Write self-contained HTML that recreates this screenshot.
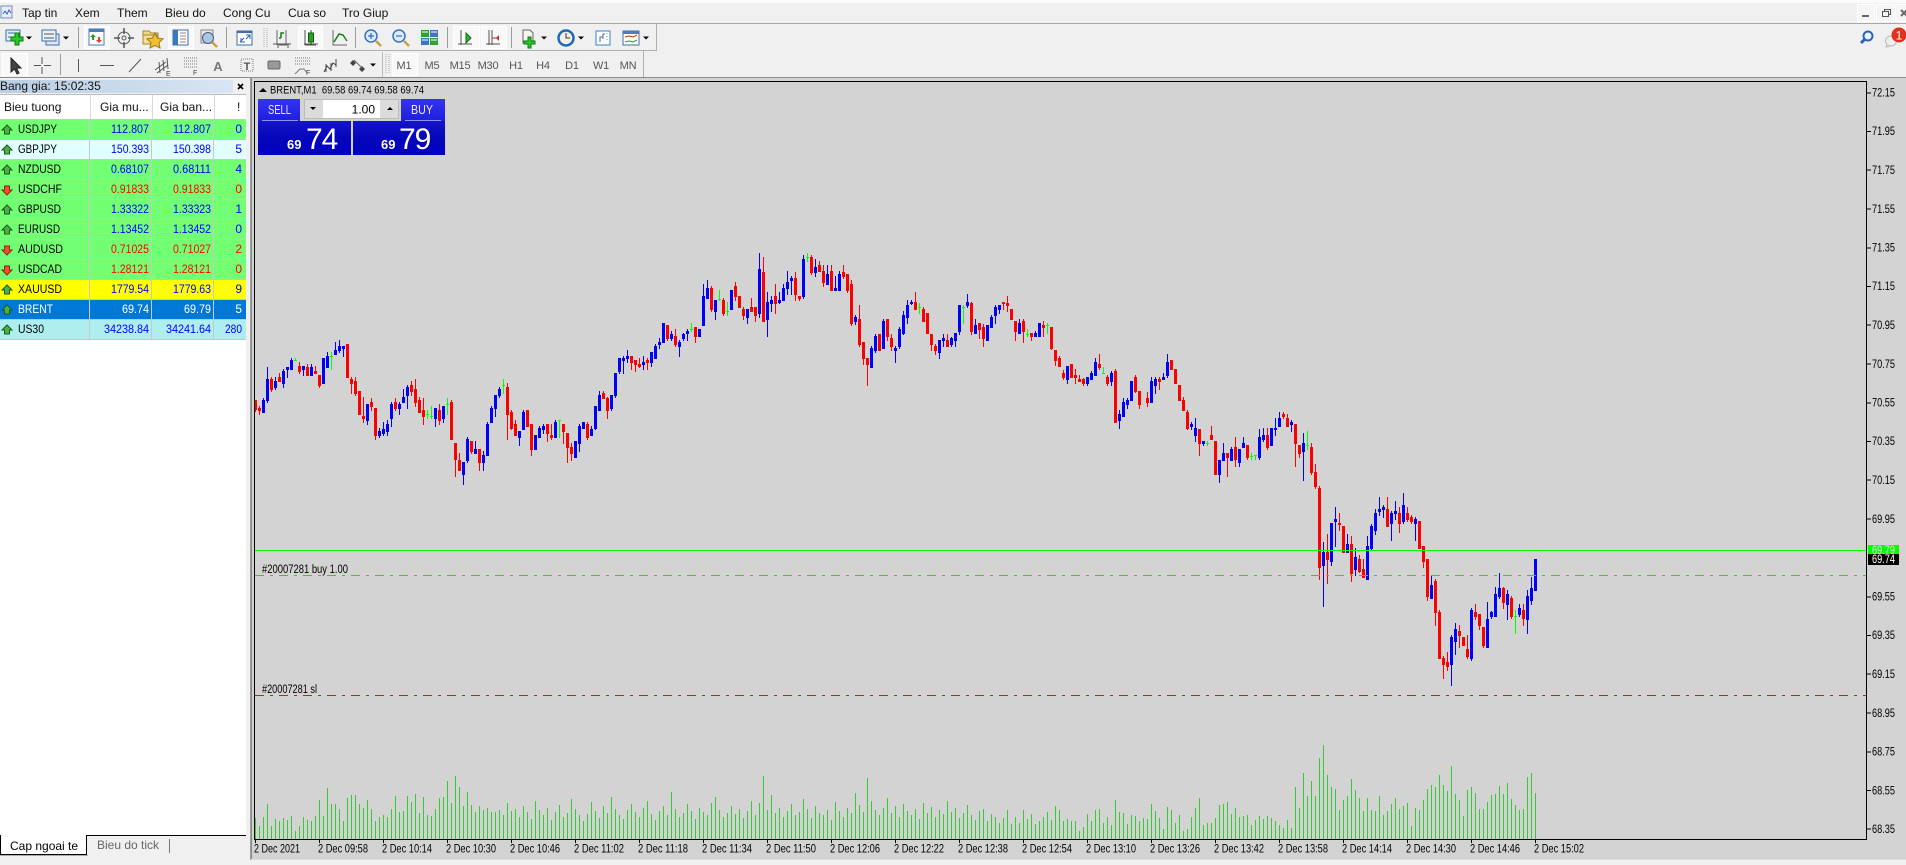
<!DOCTYPE html>
<html><head><meta charset="utf-8"><title>MT4</title>
<style>
html,body{margin:0;padding:0;background:#f0f0f0;overflow:hidden}
svg{display:block;font-family:"Liberation Sans",Arial,sans-serif}
.m{font-size:12px;fill:#111}
.h{font-size:12px;fill:#111}
.s{font-size:12px;fill:#000}
.n{font-size:12px;text-anchor:end}
.bl{fill:#0000ff}.rd{fill:#ff0000}.wh{fill:#fff}
.tf{font-size:11px;fill:#555;text-anchor:middle;letter-spacing:-.2px}
.p{font-size:11.5px;fill:#000}
.t{font-size:11.5px;fill:#000}
.c path{fill:none}
.w{stroke-width:3}.k{stroke-width:9}
.B{stroke:#0000ff}.R{stroke:#ff0000}.G{stroke:#00ff00}
.ic{fill:none;stroke:#555;stroke-width:1}
</style></head><body>
<svg width="1906" height="865" viewBox="0 0 1906 865" xmlns="http://www.w3.org/2000/svg">
<defs>
<linearGradient id="hd" x1="0" x2="1" y1="0" y2="0"><stop offset="0" stop-color="#b9cee3"/><stop offset="1" stop-color="#d8e5f3"/></linearGradient>
<linearGradient id="bh" x1="0" x2="0" y1="0" y2="1"><stop offset="0" stop-color="#3535f0"/><stop offset="1" stop-color="#1c1cdc"/></linearGradient>
<linearGradient id="bb" x1="0" x2="0" y1="0" y2="1"><stop offset="0" stop-color="#1414c8"/><stop offset=".5" stop-color="#0606ba"/><stop offset="1" stop-color="#0000c4"/></linearGradient>
<g id="au"><path d="M7 -5L12 0H9.5V4H4.5V0H2Z" fill="#4bb04b" stroke="#1b5c1b" stroke-width="1"/></g>
<g id="ad"><path d="M7 5L12 0H9.5V-4H4.5V0H2Z" fill="#f05030" stroke="#8c2a14" stroke-width="1"/></g>
<path id="tr" d="M-3 -1.5H3L0 1.5Z" fill="#000"/>
</defs>

<!-- background bars -->
<rect width="1906" height="865" fill="#f0f0f0"/>
<rect width="1906" height="3" fill="#fbfbfb"/>
<rect y="23" width="1906" height="1" fill="#a8a8a8"/>
<rect y="50" width="656" height="1" fill="#b0b0b0"/>
<rect x="656" y="24" width="1" height="27" fill="#b0b0b0"/>
<rect x="643" y="51" width="1" height="26" fill="#b0b0b0"/>
<rect y="77" width="1906" height="1" fill="#8a8a8a"/>

<!-- app icon + menu -->
<g transform="translate(1 5)"><rect x="0" y="1" width="11" height="12" fill="#e8eef8" stroke="#6f8fbf"/><path d="M2 9l2-3 2 3 2-4 2 3" fill="none" stroke="#3060b0"/></g>
<text class="m" x="22" y="17">Tap tin</text>
<text class="m" x="75" y="17">Xem</text>
<text class="m" x="117" y="17">Them</text>
<text class="m" x="165" y="17">Bieu do</text>
<text class="m" x="223" y="17">Cong Cu</text>
<text class="m" x="288" y="17">Cua so</text>
<text class="m" x="342" y="17">Tro Giup</text>

<!-- window buttons -->
<g fill="#f5f5f5" stroke="#fff"><rect x="1857.5" y="4.5" width="17" height="17"/><rect x="1876.5" y="4.5" width="17" height="17"/><rect x="1895.5" y="4.5" width="14" height="17"/></g>
<rect x="1862" y="15" width="7" height="2" fill="#666"/>
<path d="M1882.5 11.5h6v5h-6zM1884.5 11.5v-2h6v5h-2" fill="none" stroke="#555"/>
<path d="M1901 10l6 6M1907 10l-6 6" stroke="#666" stroke-width="2"/>
<circle cx="1868" cy="36" r="4.5" fill="#eaf2ff" stroke="#2a62c0" stroke-width="2"/>
<path d="M1864.5 39.5L1861 43" stroke="#2a62c0" stroke-width="3"/>
<ellipse cx="1891" cy="41" rx="5.5" ry="5" fill="#eee" stroke="#bbb"/><path d="M1887 45l-1 2 4-1" fill="#ddd" stroke="#bbb"/>
<circle cx="1899" cy="35" r="7.5" fill="#e03020"/>
<text x="1899" y="39.5" font-size="12" fill="#fff" text-anchor="middle">1</text>

<!-- toolbar highlighted boxes -->
<g fill="#f8f8f8" stroke="#fff">
<rect x="84.5" y="26.5" width="25" height="22"/><rect x="168.5" y="26.5" width="25" height="22"/>
<rect x="298.5" y="26.5" width="24" height="22"/><rect x="453.5" y="26.5" width="26" height="22"/>
<rect x="481.5" y="26.5" width="25" height="22"/><rect x="2.5" y="53.5" width="25" height="22"/>
<rect x="392.5" y="53.5" width="25" height="22"/>
</g>
<!-- separators -->
<g fill="#9c9c9c">
<rect x="78" y="27" width="1" height="21"/><rect x="226" y="27" width="1" height="21"/>
<rect x="355" y="27" width="1" height="21"/><rect x="447" y="27" width="1" height="21"/>
<rect x="511" y="27" width="1" height="21"/><rect x="60" y="54" width="1" height="21"/>
<rect x="382" y="52" width="1" height="25" fill="#bbb"/>
</g>
<path d="M264 28v20M267 28v20M386 54v20M389 54v20" stroke="#aaa" stroke-dasharray="1 1" fill="none"/>

<!-- Row 1 icons -->
<g><rect x="6" y="30" width="14" height="11" fill="#e4ecf8" stroke="#3a6ea8"/><path d="M8 33h10M8 37h6" stroke="#3a6ea8"/><path d="M15 33h4v4h4v4h-4v4h-4v-4h-4v-4h4z" fill="#28c828" stroke="#0a7a0a"/></g>
<use href="#tr" x="29" y="38"/>
<g><rect x="46" y="34" width="13" height="11" fill="#dfe9f6" stroke="#3a6ea8"/><rect x="42" y="30" width="14" height="11" fill="#e8f0fa" stroke="#3a6ea8"/><path d="M44 34h10M44 38h10" stroke="#555"/></g>
<use href="#tr" x="66" y="38"/>
<g><rect x="89" y="29" width="15" height="16" fill="#fff" stroke="#4a7eb5"/><rect x="89" y="29" width="15" height="3" fill="#4a7eb5"/><path d="M93 34l3 3h-2v3h-2v-3h-2z" fill="#28a028"/><path d="M99 43l-3-3h2v-3h2v3h2z" fill="#e04020"/></g>
<g fill="none" stroke="#555"><circle cx="124" cy="38" r="6"/><circle cx="124" cy="38" r="2"/><path d="M124 28v6M124 42v6M114 38h6M128 38h6" stroke-width="1.5"/></g>
<g><path d="M143 34v-3h6l2 2h7v4h-15z" fill="#f0d880" stroke="#a08840"/><rect x="143" y="35" width="14" height="9" fill="#f4e090" stroke="#a08840"/><path d="M155 33l2.5 5 5.500 .8-4 3.900 1 5.300-5-2.600-5 2.600 1-5.300-4-3.900 5.500-.8z" fill="#f0c030" stroke="#a07810"/></g>
<g><rect x="173" y="30" width="15" height="15" fill="#fff" stroke="#3a6ea8"/><rect x="173" y="30" width="5" height="15" fill="#3a78c0"/><path d="M180 33h6M180 36h6M180 39h6M180 42h6" stroke="#888"/></g>
<g><rect x="201" y="30" width="12" height="13" fill="#e8e8e8" stroke="#888"/><circle cx="208" cy="38" r="5.500" fill="#a8c8e8" stroke="#557"/><path d="M212 42l5 5" stroke="#c8a040" stroke-width="2.500"/></g>
<g><rect x="237" y="31" width="15" height="14" fill="#fff" stroke="#3a6ea8"/><rect x="237" y="31" width="15" height="2" fill="#3a6ea8"/><path d="M240 42l4-4M241 38v4h4M250 35l-4 4M246 35h4v4" stroke="#2a60b0" fill="none"/></g>
<g fill="none" stroke="#555"><path d="M277 30v15M277 45h12M286 30v15" stroke="#666"/><path d="M281 38v-5h3M281 38h-2" stroke="#108010" stroke-width="1.500"/><path d="M273 44h18M278 46v2M288 46v2" stroke="#555"/></g>
<g fill="none" stroke="#555"><path d="M305 30v15M305 45h11M304 44h14"/><rect x="308.500" y="33" width="5" height="9" fill="#2aa02a" stroke="#0a600a"/><path d="M311 30v3M311 42v3" stroke="#0a600a"/></g>
<g fill="none"><path d="M333 30v15h14" stroke="#666"/><path d="M334 42l5-8 4 1 4 6" stroke="#188018" stroke-width="1.500"/></g>
<g><circle cx="371" cy="36" r="6" fill="#d8ecff" stroke="#3a70c0" stroke-width="1.500"/><path d="M368 36h6M371 33v6" stroke="#1a50a0"/><path d="M376 41l5 5" stroke="#c8a040" stroke-width="2.500"/></g>
<g><circle cx="399" cy="36" r="6" fill="#d8ecff" stroke="#3a70c0" stroke-width="1.500"/><path d="M396 36h6" stroke="#1a50a0"/><path d="M404 41l5 5" stroke="#c8a040" stroke-width="2.500"/></g>
<g><rect x="421" y="30" width="8" height="7" fill="#30a030"/><rect x="430" y="30" width="8" height="7" fill="#3a78c0"/><rect x="421" y="38" width="8" height="7" fill="#3a78c0"/><rect x="430" y="38" width="8" height="7" fill="#30a030"/><path d="M422 32h6M431 32h6M422 40h6M431 40h6" stroke="#fff"/></g>
<g fill="none"><path d="M461 30v15M458 44h14" stroke="#555"/><path d="M466 33l5 5-5 5z" fill="#30b030" stroke="#107010"/></g>
<g fill="none"><path d="M489 30v15M486 44h14" stroke="#555"/><path d="M492 30v15" stroke="#555"/><path d="M497 38h-5" stroke="#c03010" stroke-width="1"/><path d="M499 35v6l-3-3z" fill="#c03010"/></g>
<g><path d="M523 30h7l3 3v10h-10z" fill="#f4f4ec" stroke="#666"/><path d="M528 37h3v4h4v3h-4v4h-3v-4h-4v-3h4z" fill="#28c828" stroke="#0a7a0a"/></g>
<use href="#tr" x="544" y="38"/>
<g><circle cx="566" cy="38" r="7.500" fill="#f4f0e8" stroke="#1e68b8" stroke-width="2.500"/><path d="M566 33v5h4" stroke="#333" fill="none"/></g>
<use href="#tr" x="581" y="38"/>
<g><rect x="596" y="31" width="14" height="14" fill="#fff" stroke="#3a80c8"/><path d="M600 42v-5h3M603 39v-5h2" stroke="#3a70a8" fill="none"/><path d="M607 33v1M607 36v1M607 39v1" stroke="#888"/></g>
<g><rect x="623" y="31" width="16" height="14" fill="#fff" stroke="#3a6ea8"/><rect x="623" y="31" width="16" height="3" fill="#4a7eb5"/><path d="M625 37l4-1 4 1 4-2" stroke="#c03010" fill="none"/><path d="M625 42l4-1 4 1 4-2" stroke="#20a020" fill="none"/></g>
<use href="#tr" x="646" y="38"/>

<!-- Row 2 icons -->
<path d="M11 58v14l3.500-3 2.500 5 2-1-2.500-5h4.500z" fill="#444" stroke="#222"/>
<path d="M42 57v7M42 67v7M34 65.500h7M44 65.500h7" stroke="#555" fill="none"/>
<path d="M78.500 59v13M100 65.500h14M129 72l12-13" stroke="#555" stroke-width="1" fill="none"/>
<g class="ic"><path d="M155 70l11-8M157 73l11-8M159 62l1 11M163 60l1 11M167 58l1 11"/></g><text x="166" y="76" font-size="7" fill="#444">E</text>
<path d="M184 58h13M184 61h13M184 64h13M184 67h13" stroke="#777" stroke-dasharray="1 1" fill="none"/><text x="193" y="75" font-size="7" fill="#444">F</text>
<text x="218" y="71" font-size="13" font-weight="bold" fill="#777" text-anchor="middle">A</text>
<rect x="241" y="59" width="12" height="12" fill="none" stroke="#777" stroke-dasharray="1 1"/><text x="247" y="70" font-size="11" font-weight="bold" fill="#555" text-anchor="middle">T</text>
<rect x="268" y="61" width="12" height="8" rx="1.500" fill="#999" stroke="#666"/>
<path d="M295 58h15M295 61h15M295 64h15" stroke="#777" stroke-dasharray="1 1" fill="none"/><path d="M295 74l5-5h4l3 4" stroke="#777" fill="none"/><text x="306" y="75" font-size="7" fill="#444">F</text>
<path d="M324 72l3-6 3 3 3-6 3 2M326 64v8M331 63v8M336 59v8" stroke="#444" fill="none"/>
<path d="M353 60l3 3-3 3-3-3zM362 66l3 3-3 3-3-3z" fill="#444"/><path d="M354 60l8 8" stroke="#666"/>
<use href="#tr" x="373" y="65"/>
<text class="tf" x="404" y="69">M1</text><text class="tf" x="432" y="69">M5</text><text class="tf" x="460" y="69">M15</text><text class="tf" x="488" y="69">M30</text><text class="tf" x="516" y="69">H1</text><text class="tf" x="543" y="69">H4</text><text class="tf" x="572" y="69">D1</text><text class="tf" x="601" y="69">W1</text><text class="tf" x="628" y="69">MN</text>

<!-- Market watch panel -->
<rect x="0" y="78" width="250" height="782" fill="#f0f0f0"/>
<rect x="0" y="80" width="233" height="13" fill="url(#hd)"/>
<text class="h" x="0" y="90">Bang gia: 15:02:35</text>
<path d="M238 84l5 5M243 84l-5 5" stroke="#000" stroke-width="1.600"/>
<rect x="0" y="95" width="246" height="740" fill="#fff"/>
<rect x="0" y="94" width="246" height="1" fill="#bbb"/>
<text class="h" x="4" y="111">Bieu tuong</text>
<text class="h" x="100" y="111">Gia mu...</text>
<text class="h" x="160" y="111">Gia ban...</text>
<text class="h" x="237" y="111">!</text>
<g fill="#d8d8d8"><rect x="90" y="95" width="1" height="24"/><rect x="152" y="95" width="1" height="24"/><rect x="214" y="95" width="1" height="24"/></g>
<g fill="#72ff72"><rect y="119" width="246" height="20"/><rect y="159" width="246" height="100"/></g>
<rect y="139" width="246" height="20" fill="#e0ffff"/>
<rect y="259" width="246" height="20" fill="#72ff72"/>
<rect y="279" width="246" height="20" fill="#ffff00"/>
<rect y="299" width="246" height="20" fill="#0078d7"/>
<rect y="319" width="246" height="20" fill="#afeeee"/>
<g fill="#c8c8c8"><rect y="119" width="246" height="1" opacity=".6"/><rect y="139" width="246" height="1"/><rect y="159" width="246" height="1"/><rect y="179" width="246" height="1"/><rect y="199" width="246" height="1"/><rect y="219" width="246" height="1"/><rect y="239" width="246" height="1"/><rect y="259" width="246" height="1"/><rect y="279" width="246" height="1"/><rect y="299" width="246" height="1"/><rect y="319" width="246" height="1"/><rect y="339" width="246" height="1"/>
<rect x="89" y="119" width="1" height="220"/><rect x="151" y="119" width="1" height="220"/><rect x="213" y="119" width="1" height="220"/></g>

<use href="#au" x="0" y="130"/><text class="s" x="18" y="133" textLength="39" lengthAdjust="spacingAndGlyphs">USDJPY</text><text class="n bl" x="149" y="133" textLength="38" lengthAdjust="spacingAndGlyphs">112.807</text><text class="n bl" x="211" y="133" textLength="38" lengthAdjust="spacingAndGlyphs">112.807</text><text class="n bl" x="242" y="133">0</text>
<use href="#au" x="0" y="150"/><text class="s" x="18" y="153" textLength="39" lengthAdjust="spacingAndGlyphs">GBPJPY</text><text class="n bl" x="149" y="153" textLength="38" lengthAdjust="spacingAndGlyphs">150.393</text><text class="n bl" x="211" y="153" textLength="38" lengthAdjust="spacingAndGlyphs">150.398</text><text class="n bl" x="242" y="153">5</text>
<use href="#au" x="0" y="170"/><text class="s" x="18" y="173" textLength="43" lengthAdjust="spacingAndGlyphs">NZDUSD</text><text class="n bl" x="149" y="173" textLength="38" lengthAdjust="spacingAndGlyphs">0.68107</text><text class="n bl" x="211" y="173" textLength="38" lengthAdjust="spacingAndGlyphs">0.68111</text><text class="n bl" x="242" y="173">4</text>
<use href="#ad" x="0" y="190"/><text class="s" x="18" y="193" textLength="44" lengthAdjust="spacingAndGlyphs">USDCHF</text><text class="n rd" x="149" y="193" textLength="38" lengthAdjust="spacingAndGlyphs">0.91833</text><text class="n rd" x="211" y="193" textLength="38" lengthAdjust="spacingAndGlyphs">0.91833</text><text class="n rd" x="242" y="193">0</text>
<use href="#au" x="0" y="210"/><text class="s" x="18" y="213" textLength="43" lengthAdjust="spacingAndGlyphs">GBPUSD</text><text class="n bl" x="149" y="213" textLength="38" lengthAdjust="spacingAndGlyphs">1.33322</text><text class="n bl" x="211" y="213" textLength="38" lengthAdjust="spacingAndGlyphs">1.33323</text><text class="n bl" x="242" y="213">1</text>
<use href="#au" x="0" y="230"/><text class="s" x="18" y="233" textLength="42" lengthAdjust="spacingAndGlyphs">EURUSD</text><text class="n bl" x="149" y="233" textLength="38" lengthAdjust="spacingAndGlyphs">1.13452</text><text class="n bl" x="211" y="233" textLength="38" lengthAdjust="spacingAndGlyphs">1.13452</text><text class="n bl" x="242" y="233">0</text>
<use href="#ad" x="0" y="250"/><text class="s" x="18" y="253" textLength="45" lengthAdjust="spacingAndGlyphs">AUDUSD</text><text class="n rd" x="149" y="253" textLength="38" lengthAdjust="spacingAndGlyphs">0.71025</text><text class="n rd" x="211" y="253" textLength="38" lengthAdjust="spacingAndGlyphs">0.71027</text><text class="n rd" x="242" y="253">2</text>
<use href="#ad" x="0" y="270"/><text class="s" x="18" y="273" textLength="44" lengthAdjust="spacingAndGlyphs">USDCAD</text><text class="n rd" x="149" y="273" textLength="38" lengthAdjust="spacingAndGlyphs">1.28121</text><text class="n rd" x="211" y="273" textLength="38" lengthAdjust="spacingAndGlyphs">1.28121</text><text class="n rd" x="242" y="273">0</text>
<use href="#au" x="0" y="290"/><text class="s" x="18" y="293" textLength="44" lengthAdjust="spacingAndGlyphs">XAUUSD</text><text class="n bl" x="149" y="293" textLength="38" lengthAdjust="spacingAndGlyphs">1779.54</text><text class="n bl" x="211" y="293" textLength="38" lengthAdjust="spacingAndGlyphs">1779.63</text><text class="n bl" x="242" y="293">9</text>
<use href="#au" x="0" y="310"/><text class="s wh" x="18" y="313" style="fill:#fff" textLength="35" lengthAdjust="spacingAndGlyphs">BRENT</text><text class="n wh" x="149" y="313" textLength="27" lengthAdjust="spacingAndGlyphs">69.74</text><text class="n wh" x="211" y="313" textLength="27" lengthAdjust="spacingAndGlyphs">69.79</text><text class="n wh" x="242" y="313">5</text>
<use href="#au" x="0" y="330"/><text class="s" x="18" y="333" textLength="26" lengthAdjust="spacingAndGlyphs">US30</text><text class="n bl" x="149" y="333" textLength="45" lengthAdjust="spacingAndGlyphs">34238.84</text><text class="n bl" x="211" y="333" textLength="45" lengthAdjust="spacingAndGlyphs">34241.64</text><text class="n bl" x="242" y="333" textLength="17" lengthAdjust="spacingAndGlyphs">280</text>

<!-- Tabs -->
<rect x="0" y="836" width="246" height="24" fill="#f0f0f0"/>
<rect x="0" y="835" width="246" height="1" fill="#000"/>
<path d="M.5 835V854.500H86.500V835" fill="#fff" stroke="#000"/>
<text class="h" x="10" y="850" style="fill:#000">Cap ngoai te</text>
<text class="h" x="97" y="849" style="fill:#666">Bieu do tick</text>
<rect x="169" y="839" width="1" height="14" fill="#777"/>
<rect x="87" y="855" width="163" height="1" fill="#f0f0f0"/>
<rect x="0" y="855" width="88" height="1" fill="#aaa"/>
<rect x="0" y="860" width="250" height="1" fill="#bdbdbd"/>
<rect x="250" y="78" width="1" height="783" fill="#a0a0a0"/>

<!-- Chart area -->
<rect x="251" y="78" width="1655" height="782" fill="#d3d3d3"/>
<rect x="251" y="78" width="1" height="782" fill="#888"/>
<rect x="0" y="860" width="1906" height="5" fill="#f0f0f0"/>
<rect x="251" y="859" width="1655" height="1" fill="#dedede"/>

<!-- Volumes -->
<path shape-rendering="crispEdges" fill="none" stroke="#32cd32" stroke-width="1" transform="translate(.5 0)" d="M255 839v-21zm4 0v-13zm4 0v-22zm4 0v-35zm4 0v-13zm4 0v-20zm4 0v-18zm4 0v-21zm4 0v-19zm4 0v-23zm4 0v-8zm4 0v-13zm4 0v-22zm4 0v-19zm4 0v-18zm4 0v-23zm4 0v-39zm4 0v-23zm4 0v-51zm4 0v-35zm4 0v-35zm4 0v-30zm4 0v-18zm4 0v-41zm4 0v-44zm4 0v-44zm4 0v-35zm4 0v-31zm4 0v-39zm4 0v-30zm4 0v-18zm4 0v-22zm4 0v-24zm4 0v-22zm4 0v-30zm4 0v-43zm4 0v-27zm4 0v-28zm4 0v-43zm4 0v-37zm4 0v-45zm4 0v-26zm4 0v-42zm4 0v-24zm4 0v-23zm4 0v-30zm4 0v-41zm4 0v-42zm4 0v-58zm4 0v-36zm4 0v-63zm4 0v-52zm4 0v-33zm4 0v-47zm4 0v-34zm4 0v-27zm4 0v-33zm4 0v-29zm4 0v-31zm4 0v-27zm4 0v-27zm4 0v-29zm4 0v-24zm4 0v-36zm4 0v-28zm4 0v-30zm4 0v-22zm4 0v-33zm4 0v-27zm4 0v-20zm4 0v-38zm4 0v-29zm4 0v-24zm4 0v-31zm4 0v-19zm4 0v-27zm4 0v-34zm4 0v-22zm4 0v-26zm4 0v-40zm4 0v-30zm4 0v-24zm4 0v-18zm4 0v-25zm4 0v-37zm4 0v-28zm4 0v-21zm4 0v-33zm4 0v-26zm4 0v-42zm4 0v-30zm4 0v-24zm4 0v-20zm4 0v-29zm4 0v-35zm4 0v-27zm4 0v-22zm4 0v-31zm4 0v-38zm4 0v-25zm4 0v-19zm4 0v-28zm4 0v-33zm4 0v-24zm4 0v-47zm4 0v-30zm4 0v-22zm4 0v-26zm4 0v-35zm4 0v-28zm4 0v-20zm4 0v-31zm4 0v-27zm4 0v-24zm4 0v-36zm4 0v-42zm4 0v-29zm4 0v-22zm4 0v-26zm4 0v-33zm4 0v-25zm4 0v-30zm4 0v-21zm4 0v-28zm4 0v-38zm4 0v-24zm4 0v-36zm4 0v-63zm4 0v-29zm4 0v-44zm4 0v-26zm4 0v-31zm4 0v-22zm4 0v-28zm4 0v-35zm4 0v-24zm4 0v-27zm4 0v-40zm4 0v-30zm4 0v-21zm4 0v-33zm4 0v-26zm4 0v-24zm4 0v-29zm4 0v-19zm4 0v-37zm4 0v-28zm4 0v-22zm4 0v-31zm4 0v-26zm4 0v-46zm4 0v-34zm4 0v-27zm4 0v-61zm4 0v-38zm4 0v-29zm4 0v-24zm4 0v-31zm4 0v-41zm4 0v-26zm4 0v-33zm4 0v-22zm4 0v-35zm4 0v-28zm4 0v-24zm4 0v-30zm4 0v-20zm4 0v-36zm4 0v-26zm4 0v-32zm4 0v-22zm4 0v-29zm4 0v-25zm4 0v-38zm4 0v-27zm4 0v-31zm4 0v-21zm4 0v-26zm4 0v-34zm4 0v-24zm4 0v-19zm4 0v-28zm4 0v-30zm4 0v-18zm4 0v-25zm4 0v-22zm4 0v-16zm4 0v-21zm4 0v-29zm4 0v-15zm4 0v-22zm4 0v-16zm4 0v-29zm4 0v-20zm4 0v-25zm4 0v-15zm4 0v-18zm4 0v-22zm4 0v-27zm4 0v-19zm4 0v-33zm4 0v-29zm4 0v-18zm4 0v-20zm4 0v-18zm4 0v-18zm4 0v-8zm4 0v-12zm4 0v-25zm4 0v-18zm4 0v-29zm4 0v-30zm4 0v-16zm4 0v-22zm4 0v-14zm4 0v-39zm4 0v-27zm4 0v-26zm4 0v-15zm4 0v-24zm4 0v-23zm4 0v-18zm4 0v-21zm4 0v-20zm4 0v-35zm4 0v-28zm4 0v-21zm4 0v-10zm4 0v-32zm4 0v-29zm4 0v-16zm4 0v-24zm4 0v-8zm4 0v-10zm4 0v-22zm4 0v-31zm4 0v-41zm4 0v-14zm4 0v-16zm4 0v-16zm4 0v-21zm4 0v-34zm4 0v-35zm4 0v-37zm4 0v-25zm4 0v-31zm4 0v-22zm4 0v-23zm4 0v-24zm4 0v-14zm4 0v-19zm4 0v-23zm4 0v-20zm4 0v-23zm4 0v-21zm4 0v-18zm4 0v-14zm4 0v-11zm4 0v-19zm4 0v-11zm4 0v-52zm4 0v-31zm4 0v-66zm4 0v-43zm4 0v-58zm4 0v-43zm4 0v-81zm4 0v-94zm4 0v-64zm4 0v-52zm4 0v-50zm4 0v-29zm4 0v-39zm4 0v-43zm4 0v-60zm4 0v-49zm4 0v-41zm4 0v-28zm4 0v-41zm4 0v-29zm4 0v-28zm4 0v-43zm4 0v-24zm4 0v-28zm4 0v-35zm4 0v-41zm4 0v-30zm4 0v-33zm4 0v-36zm4 0v-13zm4 0v-31zm4 0v-29zm4 0v-39zm4 0v-50zm4 0v-54zm4 0v-52zm4 0v-64zm4 0v-54zm4 0v-48zm4 0v-73zm4 0v-45zm4 0v-39zm4 0v-23zm4 0v-49zm4 0v-52zm4 0v-46zm4 0v-30zm4 0v-30zm4 0v-37zm4 0v-44zm4 0v-45zm4 0v-53zm4 0v-45zm4 0v-56zm4 0v-40zm4 0v-34zm4 0v-29zm4 0v-30zm4 0v-62zm4 0v-66zm4 0v-46z"/>

<!-- Candles group 1 -->
<g class="c" shape-rendering="crispEdges" transform="translate(250.1667 230) scale(.33333)">
<path class="w B" d="M40 504V549M52 411V519M76 441V480M100 417V474M112 411V444M124 384V420M160 408V438M184 402V438M232 366V414M256 336V375M268 330V369M280 348V381M352 522V585M388 594V624M400 576V618M412 570V618M424 516V591M448 516V555M460 477V519M472 465V537M556 534V591M580 528V579M640 696V765M652 621V699M676 633V672M700 663V723M712 576V678M724 528V579M736 495V561M748 471V504M808 603V648M820 540V600M868 588V624M880 582V612M916 570V624M988 582V666M1024 588V618M1036 528V600M1048 483V543M1084 495V543M1096 429V504M1108 384V432M1120 378V432M1132 360V399M1180 378V420M1204 366V411M1216 342V387M1228 324V357M1264 303V333M1288 330V381M1300 309V333M1312 297V333"/>
<path class="k B" d="M40 510V549M52 447V513M76 453V474M100 423V462M112 411V420M124 390V420M160 408V420M184 411V438M220 384V462M232 378V414M256 360V375M268 348V363M280 348V357M352 522V573M388 603V618M400 597V612M412 582V606M424 522V567M448 522V537M460 501V519M472 471V498M556 534V567M580 528V567M640 696V735M652 627V693M676 657V672M700 675V699M712 582V678M724 534V579M736 495V537M748 477V498M808 603V624M820 546V600M856 615V660M868 594V624M880 588V600M916 576V624M976 633V684M988 588V642M1000 576V597M1024 597V618M1036 528V597M1048 495V543M1084 495V537M1096 429V498M1108 384V426M1120 384V393M1132 378V387M1180 396V405M1204 366V399M1216 348V387M1228 336V345M1240 279V339M1264 312V327M1288 336V351M1300 312V327M1312 303V312M1348 297V321"/>
<path class="w R" d="M16 510V546M28 528V555M64 441V486M88 429V456M148 396V432M172 402V438M196 408V432M208 435V474M304 441V492M316 441V498M340 501V579M364 504V543M376 534V630M436 504V543M484 453V498M496 447V531M508 501V549M520 504V585M568 522V585M604 510V630M616 639V741M628 669V723M664 633V672M688 657V723M772 459V630M784 540V600M796 570V618M844 582V678M892 582V636M904 582V630M940 582V642M952 609V699M964 639V693M1012 576V630M1060 483V507M1072 501V567M1144 378V420M1156 390V426M1168 384V414M1192 384V420M1252 285V333M1276 297V351M1336 291V339"/>
<path class="k R" d="M16 510V540M28 534V543M64 447V480M88 441V456M148 408V426M172 411V438M196 423V432M208 435V468M292 342V444M304 447V462M316 453V492M328 483V555M340 558V567M364 516V531M376 534V618M436 516V537M484 465V486M496 477V519M508 510V549M520 540V561M568 540V573M604 516V630M616 639V690M628 690V723M664 633V666M688 657V699M772 471V555M784 546V597M796 582V618M832 540V591M844 582V660M892 582V612M904 615V624M940 582V606M952 609V654M964 651V672M1012 582V624M1060 489V507M1072 504V543M1144 378V399M1156 390V405M1168 402V411M1192 390V399M1252 285V327M1276 318V345M1336 291V321"/>
<path class="w G" d="M136 384V393M244 366V420M532 540V567M544 528V567M592 504V555M760 447V492M928 570V624M1324 279V306"/>
<path class="k G" d="M136 390V393M244 378V381M532 552V555M544 558V561M592 522V525M760 465V468M928 570V573M1324 297V300"/>
</g>
<!-- Candles group 2 -->
<g class="c" shape-rendering="crispEdges" transform="translate(700.1667 230) scale(.33333)">
<path class="w B" d="M10 162V288M22 150V207M46 210V270M142 237V282M178 69V264M202 186V321M214 198V246M238 186V222M250 162V213M262 123V195M274 138V195M310 75V207M346 87V141M382 105V165M406 138V183M418 123V183M466 255V285M514 348V414M526 312V369M550 267V357M586 348V399M598 291V357M610 243V315M622 210V282M634 210V225M718 330V387M730 312V351M754 321V351M766 309V351M778 225V315M802 192V234M826 267V312M874 255V294M886 225V282M898 225V252M958 267V312M1006 303V321M1102 408V462M1162 441V468M1174 423V450M1186 384V438M1234 423V468M1258 540V597M1270 504V561M1282 504V537M1354 441V519M1366 441V492M1390 429V450M1402 372V444"/>
<path class="k B" d="M10 198V288M22 174V207M46 210V246M94 180V240M142 237V264M178 117V252M202 216V270M214 210V222M238 210V219M250 174V213M262 156V177M274 144V153M310 87V201M346 111V129M382 132V165M406 174V183M418 132V183M466 261V276M514 354V414M526 318V363M550 273V357M586 354V363M598 297V351M610 255V312M622 225V264M634 216V222M718 330V369M730 324V333M754 324V345M766 309V333M778 225V306M802 216V228M826 285V312M862 285V333M874 261V294M886 231V258M898 225V240M958 279V312M1006 309V321M1018 279V321M1102 408V450M1162 441V462M1174 429V450M1186 396V438M1234 429V456M1258 552V573M1270 516V561M1282 510V525M1294 453V513M1354 453V519M1366 447V468M1390 441V450M1402 396V438"/>
<path class="w R" d="M34 168V246M70 204V258M106 156V213M130 231V270M154 204V246M166 231V276M190 81V276M226 162V252M286 126V213M298 198V213M334 75V135M358 93V126M370 105V171M394 105V183M430 105V147M442 132V189M454 150V288M478 225V351M490 336V405M502 384V468M562 267V333M574 312V363M646 186V240M670 231V276M694 312V363M706 342V375M742 312V351M814 216V315M838 279V327M850 282V351M910 216V240M922 198V246M946 273V333M970 267V339M994 309V333M1030 273V321M1054 291V360M1066 360V408M1078 378V411M1090 420V450M1126 417V462M1138 435V456M1150 444V468M1198 372V420M1222 435V468M1246 417V579M1306 435V489M1318 483V537M1342 486V531M1378 441V480M1438 465V513"/>
<path class="k R" d="M34 174V240M70 210V252M106 168V201M118 198V234M130 237V258M154 231V246M166 231V258M190 126V276M226 198V222M286 144V195M298 198V207M334 81V129M358 105V126M370 123V159M394 123V183M430 126V141M442 132V183M454 162V282M478 267V345M490 336V387M502 384V405M538 312V363M562 267V321M574 324V351M646 216V240M670 237V276M682 249V312M694 312V345M706 348V363M742 330V351M814 219V306M838 279V300M850 291V327M910 216V222M922 219V228M934 237V270M946 273V306M970 273V306M994 309V321M1030 285V294M1054 291V357M1066 360V393M1078 384V411M1090 429V444M1114 402V444M1126 435V444M1138 447V456M1150 447V462M1198 402V414M1222 441V462M1246 423V579M1306 441V486M1318 483V525M1342 504V519M1378 447V456M1414 390V420M1426 417V462M1438 465V513"/>
<path class="w G" d="M58 180V213M82 216V258M322 69V96M658 219V252M790 225V282M982 297V321M1042 279V312M1210 411V432"/>
<path class="k G" d="M58 207V210M82 243V246M322 81V84M658 231V234M790 231V234M982 312V315M1042 285V288M1210 429V432"/>
</g>
<!-- Candles group 3 -->
<g class="c" shape-rendering="crispEdges" transform="translate(1180.1667 340) scale(.33333)">
<path class="w B" d="M34 246V270M46 234V306M70 303V318M118 360V429M130 309V363M154 321V363M178 327V381M190 291V324M238 267V360M250 264V306M286 234V288M298 216V261M334 240V276M370 279V423"/>
<path class="k B" d="M34 252V261M46 264V288M70 303V312M118 360V405M130 339V363M154 327V363M178 327V369M190 309V324M238 291V354M250 285V300M274 264V318M286 264V270M298 234V261M334 246V255M370 309V336"/>
<path class="w R" d="M10 171V213M22 210V270M58 267V348M94 258V300M142 339V411M166 291V381M202 315V360M262 264V330M310 216V237M322 222V261M346 252V381M358 315V354M394 309V405M406 372V447"/>
<path class="k R" d="M10 180V213M22 216V267M58 267V312M94 285V300M106 303V405M142 339V354M166 321V360M202 315V354M262 285V324M310 222V231M322 234V261M346 252V312M358 315V342M394 321V399M406 396V441"/>
<path class="w G" d="M82 303V318M214 339V360M226 345V360M382 273V330"/>
<path class="k G" d="M82 309V312M214 348V351M226 345V348M382 315V318"/>
</g>
<!-- Candles group 4 -->
<g class="c" shape-rendering="crispEdges" transform="translate(1280.1667 480) scale(.33333)">
<path class="w B" d="M130 186V381M154 129V258M166 81V201M202 162V219M226 204V288M262 168V300M274 132V213M286 87V165M298 51V108M310 75V114M334 93V183M346 63V120M370 39V132M406 111V183M454 285V357M514 465V618M526 429V525M574 384V543M622 366V504M634 393V417M646 321V411M658 279V357M682 330V420M718 372V411M742 330V462M754 291V375"/>
<path class="k B" d="M130 216V258M154 129V246M166 117V126M202 192V219M226 231V270M262 198V300M274 138V207M286 99V153M298 87V96M310 81V90M334 99V132M346 93V102M370 75V126M406 117V132M454 315V357M514 471V555M526 447V486M574 390V537M622 417V504M634 396V411M646 342V411M658 324V351M682 342V375M718 384V405M742 348V420M754 324V363M766 237V333"/>
<path class="w R" d="M118 18V300M142 162V312M178 99V153M214 168V306M238 225V279M250 237V294M322 51V141M358 81V159M382 81V126M394 105V132M430 198V264M442 237V363M466 297V438M478 390V537M490 528V597M502 516V573M538 435V504M562 465V537M586 372V420M598 402V450M610 441V504M670 321V387M694 348V417M730 372V438"/>
<path class="k R" d="M118 24V264M142 216V240M178 129V135M190 138V219M214 192V282M238 237V276M250 267V294M322 87V141M358 99V132M382 99V120M394 111V126M418 123V207M430 198V246M442 237V351M466 303V399M478 396V537M490 534V555M502 546V561M538 453V468M550 471V498M562 507V531M586 396V411M598 402V438M610 441V498M670 324V369M694 354V411M730 390V417"/>
<path class="w G" d="M706 390V462"/><path class="k G" d="M706 408V411"/>
</g>

<!-- Lines -->
<rect x="255" y="550" width="1611" height="1" fill="#00ff00"/>
<path d="M255 575.500H1866" stroke="#32cd32" stroke-dasharray="9 6 3 6" fill="none"/>
<path d="M255 695.500H1866" stroke="#e81010" stroke-dasharray="9 6 3 6" fill="none"/>
<text class="t" x="262" y="573" textLength="86" lengthAdjust="spacingAndGlyphs">#20007281 buy 1.00</text>
<text class="t" x="262" y="693" textLength="55" lengthAdjust="spacingAndGlyphs">#20007281 sl</text>

<!-- Frame -->
<rect x="254.500" y="81.500" width="1612" height="758" fill="none" stroke="#000" stroke-width="1"/>
<rect x="254" y="81" width="1" height="759" fill="#000"/>

<!-- Price ticks -->
<path stroke="#000" d="M1867 93h4M1867 131.500h4M1867 170h4M1867 209h4M1867 248h4M1867 286.500h4M1867 325h4M1867 364h4M1867 403h4M1867 441.500h4M1867 480h4M1867 519h4M1867 597h4M1867 635.500h4M1867 674h4M1867 713h4M1867 752h4M1867 790.500h4M1867 829h4" fill="none"/>
<g lengthAdjust="spacingAndGlyphs">
<text class="p" x="1872" y="96.500" textLength="23" lengthAdjust="spacingAndGlyphs">72.15</text><text class="p" x="1872" y="135" textLength="23" lengthAdjust="spacingAndGlyphs">71.95</text><text class="p" x="1872" y="174" textLength="23" lengthAdjust="spacingAndGlyphs">71.75</text><text class="p" x="1872" y="213" textLength="23" lengthAdjust="spacingAndGlyphs">71.55</text><text class="p" x="1872" y="251.500" textLength="23" lengthAdjust="spacingAndGlyphs">71.35</text><text class="p" x="1872" y="290" textLength="23" lengthAdjust="spacingAndGlyphs">71.15</text><text class="p" x="1872" y="329" textLength="23" lengthAdjust="spacingAndGlyphs">70.95</text><text class="p" x="1872" y="368" textLength="23" lengthAdjust="spacingAndGlyphs">70.75</text><text class="p" x="1872" y="406.500" textLength="23" lengthAdjust="spacingAndGlyphs">70.55</text><text class="p" x="1872" y="445" textLength="23" lengthAdjust="spacingAndGlyphs">70.35</text><text class="p" x="1872" y="484" textLength="23" lengthAdjust="spacingAndGlyphs">70.15</text><text class="p" x="1872" y="523" textLength="23" lengthAdjust="spacingAndGlyphs">69.95</text><text class="p" x="1872" y="600.500" textLength="23" lengthAdjust="spacingAndGlyphs">69.55</text><text class="p" x="1872" y="639" textLength="23" lengthAdjust="spacingAndGlyphs">69.35</text><text class="p" x="1872" y="678" textLength="23" lengthAdjust="spacingAndGlyphs">69.15</text><text class="p" x="1872" y="717" textLength="23" lengthAdjust="spacingAndGlyphs">68.95</text><text class="p" x="1872" y="755.500" textLength="23" lengthAdjust="spacingAndGlyphs">68.75</text><text class="p" x="1872" y="794.500" textLength="23" lengthAdjust="spacingAndGlyphs">68.55</text><text class="p" x="1872" y="833" textLength="23" lengthAdjust="spacingAndGlyphs">68.35</text>
</g>
<rect x="1868" y="545" width="31" height="10" fill="#00ff00"/>
<text class="p" x="1872" y="554" style="fill:#d8ffd8" textLength="23" lengthAdjust="spacingAndGlyphs">69.79</text>
<rect x="1868" y="554" width="31" height="11" fill="#000"/>
<text class="p" x="1872" y="563" style="fill:#fff" textLength="23" lengthAdjust="spacingAndGlyphs">69.74</text>

<!-- Time ticks + labels -->
<path stroke="#000" fill="none" transform="translate(.5 0)" d="M255 840v3M319 840v3M383 840v3M447 840v3M511 840v3M575 840v3M639 840v3M703 840v3M767 840v3M831 840v3M895 840v3M959 840v3M1023 840v3M1087 840v3M1151 840v3M1215 840v3M1279 840v3M1343 840v3M1407 840v3M1471 840v3M1535 840v3"/>
<text class="t" x="254" y="852.500" textLength="46" lengthAdjust="spacingAndGlyphs">2 Dec 2021</text><text class="t" x="318" y="852.500" textLength="50" lengthAdjust="spacingAndGlyphs">2 Dec 09:58</text><text class="t" x="382" y="852.500" textLength="50" lengthAdjust="spacingAndGlyphs">2 Dec 10:14</text><text class="t" x="446" y="852.500" textLength="50" lengthAdjust="spacingAndGlyphs">2 Dec 10:30</text><text class="t" x="510" y="852.500" textLength="50" lengthAdjust="spacingAndGlyphs">2 Dec 10:46</text><text class="t" x="574" y="852.500" textLength="50" lengthAdjust="spacingAndGlyphs">2 Dec 11:02</text><text class="t" x="638" y="852.500" textLength="50" lengthAdjust="spacingAndGlyphs">2 Dec 11:18</text><text class="t" x="702" y="852.500" textLength="50" lengthAdjust="spacingAndGlyphs">2 Dec 11:34</text><text class="t" x="766" y="852.500" textLength="50" lengthAdjust="spacingAndGlyphs">2 Dec 11:50</text><text class="t" x="830" y="852.500" textLength="50" lengthAdjust="spacingAndGlyphs">2 Dec 12:06</text><text class="t" x="894" y="852.500" textLength="50" lengthAdjust="spacingAndGlyphs">2 Dec 12:22</text><text class="t" x="958" y="852.500" textLength="50" lengthAdjust="spacingAndGlyphs">2 Dec 12:38</text><text class="t" x="1022" y="852.500" textLength="50" lengthAdjust="spacingAndGlyphs">2 Dec 12:54</text><text class="t" x="1086" y="852.500" textLength="50" lengthAdjust="spacingAndGlyphs">2 Dec 13:10</text><text class="t" x="1150" y="852.500" textLength="50" lengthAdjust="spacingAndGlyphs">2 Dec 13:26</text><text class="t" x="1214" y="852.500" textLength="50" lengthAdjust="spacingAndGlyphs">2 Dec 13:42</text><text class="t" x="1278" y="852.500" textLength="50" lengthAdjust="spacingAndGlyphs">2 Dec 13:58</text><text class="t" x="1342" y="852.500" textLength="50" lengthAdjust="spacingAndGlyphs">2 Dec 14:14</text><text class="t" x="1406" y="852.500" textLength="50" lengthAdjust="spacingAndGlyphs">2 Dec 14:30</text><text class="t" x="1470" y="852.500" textLength="50" lengthAdjust="spacingAndGlyphs">2 Dec 14:46</text><text class="t" x="1534" y="852.500" textLength="50" lengthAdjust="spacingAndGlyphs">2 Dec 15:02</text>

<!-- Chart title -->
<path d="M259 92l4-4 4 4z" fill="#000"/>
<text x="270" y="93.500" font-size="11" fill="#000" textLength="154" lengthAdjust="spacingAndGlyphs">BRENT,M1&#160; 69.58 69.74 69.58 69.74</text>

<!-- One click trading -->
<rect x="258" y="99" width="42" height="23" fill="url(#bh)"/>
<rect x="401" y="99" width="44" height="23" fill="url(#bh)"/>
<rect x="258" y="121" width="93" height="34" fill="url(#bb)"/>
<rect x="353" y="121" width="92" height="34" fill="url(#bb)"/>
<rect x="301" y="99" width="100" height="22" fill="#d3d3d3"/>
<rect x="300" y="99" width="2" height="22" fill="#d3d3d3"/>
<rect x="262" y="120" width="36" height="1" fill="#8f8ff5"/>
<rect x="405" y="120" width="36" height="1" fill="#8f8ff5"/>
<text x="268" y="114" font-size="13" fill="#e8e8ff" textLength="23" lengthAdjust="spacingAndGlyphs">SELL</text>
<text x="411" y="114" font-size="13" fill="#e8e8ff" textLength="22" lengthAdjust="spacingAndGlyphs">BUY</text>
<rect x="304.500" y="99.500" width="94" height="19" fill="#dcdcdc" stroke="#bbb"/>
<rect x="323" y="100" width="57" height="18" fill="#fff"/>
<use href="#tr" x="313" y="108.500"/>
<path d="M387 110h6l-3-3z" fill="#000"/>
<text x="375" y="113.500" font-size="12" fill="#000" text-anchor="end">1.00</text>
<text x="306" y="149" font-size="30" fill="#fff" style="letter-spacing:-1px">74</text>
<text x="287" y="149" font-size="13" fill="#fff" font-weight="bold">69</text>
<text x="381" y="149" font-size="13" fill="#fff" font-weight="bold">69</text>
<text x="399" y="149" font-size="30" fill="#fff" style="letter-spacing:-1px">79</text>
</svg>
</body></html>
